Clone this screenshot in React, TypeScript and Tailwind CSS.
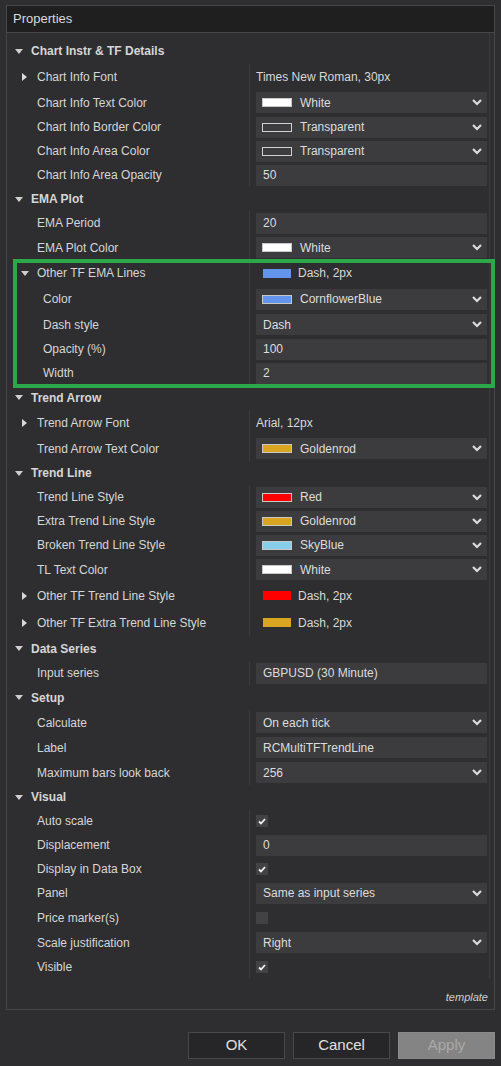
import React from 'react';

type Value =
  | { t: 'text'; text: string }
  | { t: 'color'; color: string; text: string }
  | { t: 'select'; text: string; swatch?: string }
  | { t: 'input'; text: string }
  | { t: 'check'; checked: boolean };

type Row =
  | { kind: 'cat'; label: string; h: number }
  | {
      kind: 'prop';
      label: string;
      h: number;
      value: Value;
      arrow?: 'right' | 'down';
      sub?: boolean;
    };

const cat = (label: string, h: number): Row => ({ kind: 'cat', label, h });
const prop = (
  label: string,
  h: number,
  value: Value,
  extra: { arrow?: 'right' | 'down'; sub?: boolean } = {}
): Row => ({ kind: 'prop', label, h, value, ...extra });

const before: Row[] = [
  cat('Chart Instr & TF Details', 26),
  prop('Chart Info Font', 26, { t: 'text', text: 'Times New Roman, 30px' }, { arrow: 'right' }),
  prop('Chart Info Text Color', 25, { t: 'select', text: 'White', swatch: '#ffffff' }),
  prop('Chart Info Border Color', 24, { t: 'select', text: 'Transparent', swatch: 'transparent' }),
  prop('Chart Info Area Color', 24, { t: 'select', text: 'Transparent', swatch: 'transparent' }),
  prop('Chart Info Area Opacity', 24, { t: 'input', text: '50' }),
  cat('EMA Plot', 24),
  prop('EMA Period', 24, { t: 'input', text: '20' }),
  prop('EMA Plot Color', 25, { t: 'select', text: 'White', swatch: '#ffffff' }),
];

const group: Row[] = [
  prop('Other TF EMA Lines', 26, { t: 'color', color: '#6495ed', text: 'Dash, 2px' }, { arrow: 'down' }),
  prop('Color', 26, { t: 'select', text: 'CornflowerBlue', swatch: '#6495ed' }, { sub: true }),
  prop('Dash style', 25, { t: 'select', text: 'Dash' }, { sub: true }),
  prop('Opacity (%)', 24, { t: 'input', text: '100' }, { sub: true }),
  prop('Width', 24, { t: 'input', text: '2' }, { sub: true }),
];

const after: Row[] = [
  cat('Trend Arrow', 25),
  prop('Trend Arrow Font', 26, { t: 'text', text: 'Arial, 12px' }, { arrow: 'right' }),
  prop('Trend Arrow Text Color', 25, { t: 'select', text: 'Goldenrod', swatch: '#daa520' }),
  cat('Trend Line', 24),
  prop('Trend Line Style', 24, { t: 'select', text: 'Red', swatch: '#ff0000' }),
  prop('Extra Trend Line Style', 24, { t: 'select', text: 'Goldenrod', swatch: '#daa520' }),
  prop('Broken Trend Line Style', 24, { t: 'select', text: 'SkyBlue', swatch: '#87ceeb' }),
  prop('TL Text Color', 25, { t: 'select', text: 'White', swatch: '#ffffff' }),
  prop('Other TF Trend Line Style', 27, { t: 'color', color: '#ff0000', text: 'Dash, 2px' }, { arrow: 'right' }),
  prop('Other TF Extra Trend Line Style', 27, { t: 'color', color: '#daa520', text: 'Dash, 2px' }, { arrow: 'right' }),
  cat('Data Series', 25),
  prop('Input series', 24, { t: 'input', text: 'GBPUSD (30 Minute)' }),
  cat('Setup', 25),
  prop('Calculate', 25, { t: 'select', text: 'On each tick' }),
  prop('Label', 25, { t: 'input', text: 'RCMultiTFTrendLine' }),
  prop('Maximum bars look back', 25, { t: 'select', text: '256' }),
  cat('Visual', 24),
  prop('Auto scale', 24, { t: 'check', checked: true }),
  prop('Displacement', 24, { t: 'input', text: '0' }),
  prop('Display in Data Box', 24, { t: 'check', checked: true }),
  prop('Panel', 24, { t: 'select', text: 'Same as input series' }),
  prop('Price marker(s)', 25, { t: 'check', checked: false }),
  prop('Scale justification', 25, { t: 'select', text: 'Right' }),
  prop('Visible', 24, { t: 'check', checked: true }),
];

const heightClass: Record<number, string> = {
  24: 'h-[24px]',
  25: 'h-[25px]',
  26: 'h-[26px]',
  27: 'h-[27px]',
};

const DownTri = () => (
  <svg width="8" height="5" viewBox="0 0 8 5">
    <path d="M0 0 L8 0 L4 5 Z" fill="#cfcfcf" />
  </svg>
);

const RightTri = () => (
  <svg width="5" height="8" viewBox="0 0 5 8">
    <path d="M0 0 L5 4 L0 8 Z" fill="#d8d8d8" />
  </svg>
);

const Chevron = () => (
  <svg width="10" height="7" viewBox="0 0 10 7" className="absolute right-[5px] top-[7px]">
    <path d="M1 1 L5 5 L9 1" fill="none" stroke="#dcdcdc" strokeWidth="2.2" />
  </svg>
);

const Swatch = ({ color }: { color: string }) => (
  <span
    className={
      'h-[9px] w-[30px] shrink-0 border ' +
      (color === 'transparent' ? 'border-[#d0d0d0]' : 'border-[#c8c8c8]')
    }
    style={{ backgroundColor: color }}
  />
);

const ValueCell = ({ value }: { value: Value }) => {
  switch (value.t) {
    case 'text':
      return <span className="text-[#d8d8d8]">{value.text}</span>;
    case 'color':
      return (
        <span className="flex items-center gap-[7px] pl-[7px]">
          <span className="h-[9px] w-[28px]" style={{ backgroundColor: value.color }} />
          <span className="text-[#d8d8d8]">{value.text}</span>
        </span>
      );
    case 'select':
      return (
        <div className="relative flex h-[21px] w-full items-center bg-[#3c3c3f] text-[#dcdcdc]">
          {value.swatch ? (
            <span className="flex items-center gap-[8px] pl-[6px]">
              <Swatch color={value.swatch} />
              <span>{value.text}</span>
            </span>
          ) : (
            <span className="pl-[7px]">{value.text}</span>
          )}
          <Chevron />
        </div>
      );
    case 'input':
      return (
        <div className="flex h-[21px] w-full items-center bg-[#3c3c3f] pl-[7px] text-[#dcdcdc]">
          {value.text}
        </div>
      );
    case 'check':
      return (
        <span className="flex h-[12px] w-[12px] items-center justify-center bg-[#424245]">
          {value.checked && (
            <svg width="8" height="7" viewBox="0 0 8 7">
              <path d="M1 3.5 L3 5.5 L7 1" fill="none" stroke="#f0f0f0" strokeWidth="1.8" />
            </svg>
          )}
        </span>
      );
  }
};

const RowView = ({ row }: { row: Row }) => {
  if (row.kind === 'cat') {
    return (
      <div className={`flex items-center ${heightClass[row.h]}`}>
        <span className="flex w-[24px] justify-end pr-[8px]">
          <DownTri />
        </span>
        <span className="font-bold text-[#d6d6d6]">{row.label}</span>
      </div>
    );
  }
  return (
    <div className={`flex items-center ${heightClass[row.h]}`}>
      <div className="flex h-full w-[243px] shrink-0 items-center border-r border-[#3a3a3d]">
        <span className="flex w-[30px] shrink-0 items-center justify-end pr-[10px]">
          {row.arrow === 'right' && <RightTri />}
          {row.arrow === 'down' && (
            <span className="-mr-[2px]">
              <DownTri />
            </span>
          )}
        </span>
        <span className={'text-[#d6d6d6] ' + (row.sub ? 'pl-[6px]' : '')}>{row.label}</span>
      </div>
      <div className="flex flex-1 items-center pl-[6px] pr-[2px]">
        <ValueCell value={row.value} />
      </div>
    </div>
  );
};

export default function App() {
  return (
    <div className="relative h-[1066px] w-[501px] overflow-hidden bg-[#2e2e30] font-['Liberation_Sans',Arial,sans-serif] text-[12px] text-[#d6d6d6]">
      <div className="ml-[6px] w-[489px] pt-[5px]">
        <div className="flex h-[28px] items-center border border-[#47474a] bg-[#1f1f20] pl-[6px] text-[13px] text-[#dadada]">
          Properties
        </div>
        <div className="flex h-[977px] flex-col border-x border-b border-[#47474a]">
          <div className="mr-[4px] border-r border-[#3a3a3d] pt-[5px]">
            {before.map((r, i) => (
              <RowView key={'b' + i} row={r} />
            ))}
            <div className="relative">
              {group.map((r, i) => (
                <RowView key={'g' + i} row={r} />
              ))}
              <div className="pointer-events-none absolute -bottom-[3px] -right-[6px] left-[6px] -top-[1px] border-4 border-[#2ba84a]" />
            </div>
            {after.map((r, i) => (
              <RowView key={'a' + i} row={r} />
            ))}
          </div>
          <div className="flex flex-1 items-center justify-end pr-[6px] pt-[6px]">
            <span className="text-[11px] italic text-[#cfcfcf]">template</span>
          </div>
        </div>
      </div>
      <div className="mr-[6px] mt-[22px] flex justify-end gap-[8px] text-[15px]">
        <button className="h-[27px] w-[97px] border border-[#48484b] bg-[#262628] text-[#e0e0e0]">OK</button>
        <button className="h-[27px] w-[97px] border border-[#48484b] bg-[#262628] text-[#e0e0e0]">Cancel</button>
        <button className="h-[27px] w-[97px] border border-[#8a8a8a] bg-[#848484] text-[#a9a9a9]">Apply</button>
      </div>
    </div>
  );
}
